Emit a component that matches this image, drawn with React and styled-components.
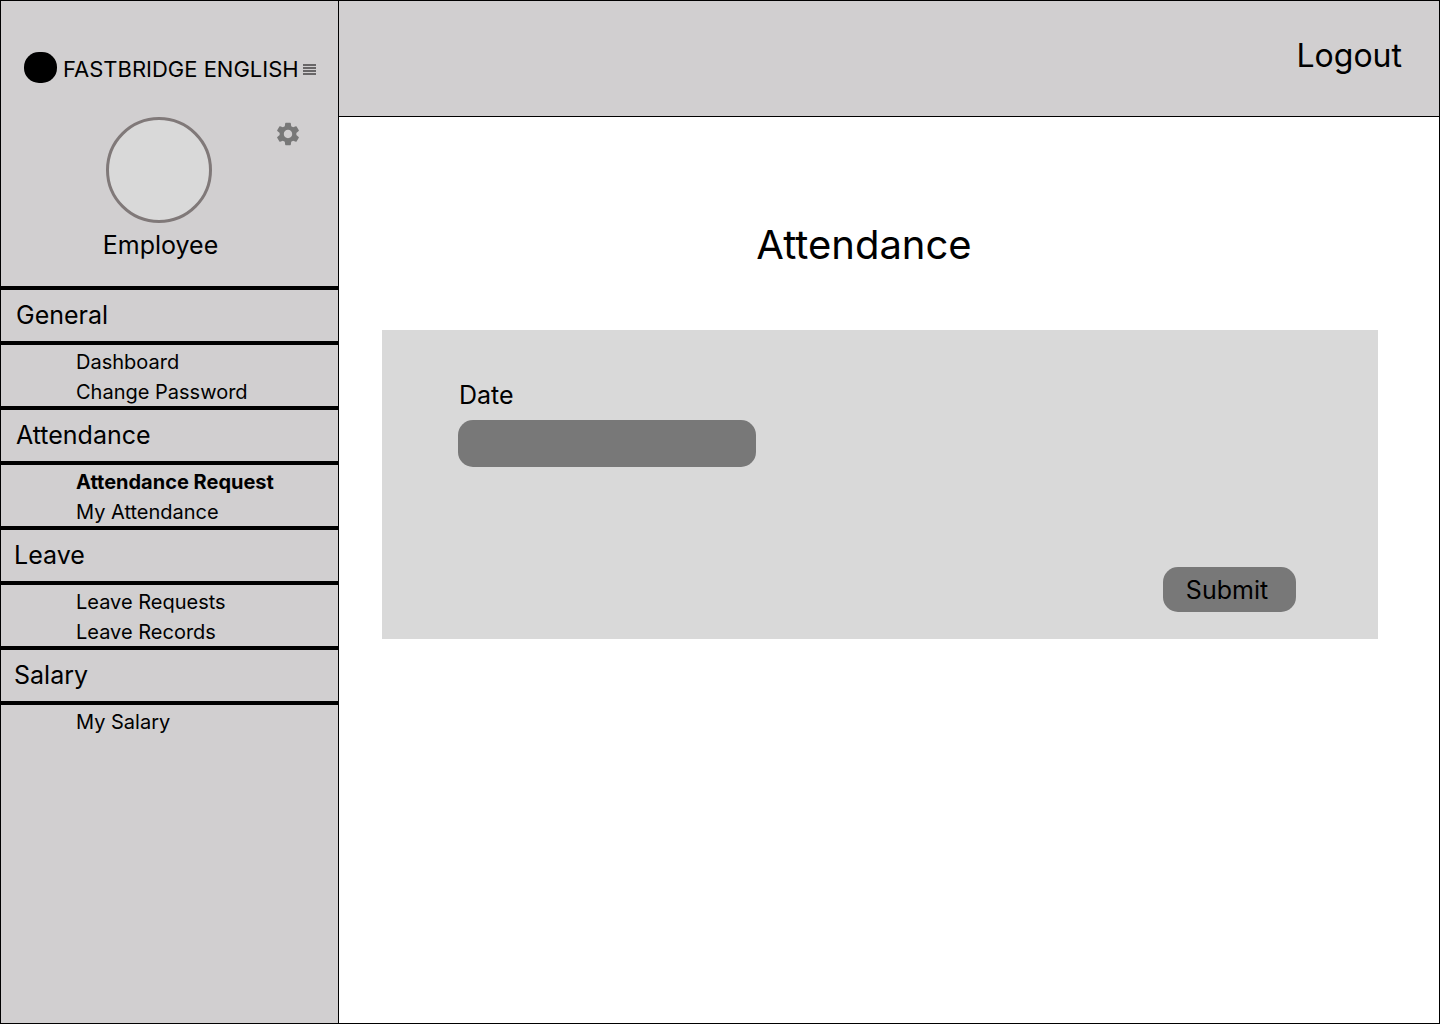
import React from "react";
import styled, { createGlobalStyle } from "styled-components";
import { MdSettings } from "react-icons/md";

const GlobalStyle = createGlobalStyle`
  *, *::before, *::after { box-sizing: border-box; }
  body {
    margin: 0;
    font-family: Inter, "Liberation Sans", sans-serif;
    color: #000;
    background: #fff;
  }
  button, input { font: inherit; color: inherit; }
`;

const Page = styled.div`
  display: grid;
  grid-template-columns: 338px 1fr;
  min-height: 100vh;
  border: 1px solid #000;
`;

const Sidebar = styled.aside`
  border-right: 1px solid #000;
  background: #d1cfd0;
`;

const Brand = styled.div`
  display: flex;
  align-items: flex-end;
  padding: 0 0 2px 23px;
  height: 86px;
  font-size: 22px;
  white-space: nowrap;
`;

const LogoMark = styled.span`
  flex: none;
  width: 33px;
  height: 31px;
  margin: 0 6px 2px 0;
  border-radius: 15px;
  background: #000;
`;

const BrandName = styled.span`
  line-height: 32px;
`;

const IconButton = styled.button`
  display: flex;
  padding: 0;
  border: 0;
  background: none;
  color: #787878;
  cursor: pointer;
`;

const MenuButton = styled(IconButton)`
  margin: 0 0 10px 4px;
  color: #686667;
`;

const Profile = styled.section`
  display: grid;
  grid-template-columns: 1fr 106px 1fr;
  grid-template-rows: 106px 30px;
  row-gap: 7px;
  padding: 30px 22px 0 1px;
  height: 199px;
`;

const Avatar = styled.div`
  grid-column: 2;
  height: 106px;
  border: 3px solid #807979;
  border-radius: 50%;
  background: #d9d9d9;
`;

const SettingsSlot = styled.div`
  justify-self: end;
  padding: 3px 14px 0 0;
`;

const UserName = styled.div`
  grid-column: 1 / -1;
  padding-left: 3px;
  font-size: 25px;
  line-height: 30px;
  text-align: center;
`;

const GroupTitle = styled.h2`
  margin: 0;
  padding: 0 ${(p) => (p.$wide ? 15 : 13)}px;
  border: solid #000;
  border-width: 4px 0;
  font-size: 25px;
  font-weight: 400;
  line-height: 51px;
`;

const GroupList = styled.ul`
  margin: 0 0 -1px;
  padding: 2px 0 0 75px;
  list-style: none;
`;

const GroupLink = styled.a`
  display: block;
  color: inherit;
  font-size: 20px;
  font-weight: ${(p) => (p.$active ? 700 : 400)};
  line-height: 30px;
  text-decoration: none;
`;

const Main = styled.div`
  display: flex;
  flex-direction: column;
`;

const TopBar = styled.header`
  display: flex;
  justify-content: flex-end;
  align-items: center;
  height: 116px;
  padding: 0 37px 6px;
  border-bottom: 1px solid #000;
  background: #d1cfd0;
`;

const LogoutButton = styled.button`
  padding: 0;
  border: 0;
  background: none;
  font-size: 32px;
  line-height: 40px;
  cursor: pointer;
`;

const Content = styled.main`
  padding: 103px 61px 0 43px;
`;

const Title = styled.h1`
  margin: 0 0 60px;
  padding-right: 32px;
  font-size: 40px;
  font-weight: 400;
  line-height: 50px;
  text-align: center;
`;

const Card = styled.form`
  display: flex;
  flex-direction: column;
  padding: 50px 82px 27px 76px;
  background: #d9d9d9;
`;

const Label = styled.label`
  padding-left: 1px;
  font-size: 25px;
  line-height: 30px;
`;

const DateInput = styled.input`
  width: 298px;
  height: 47px;
  margin: 10px 0 100px;
  padding: 0 16px;
  border: 0;
  border-radius: 15px;
  background: #787878;
  font-size: 20px;
`;

const SubmitButton = styled.button`
  align-self: flex-end;
  width: 133px;
  height: 45px;
  padding: 0 5px 0 0;
  border: 0;
  border-radius: 15px;
  background: #787878;
  font-size: 25px;
  cursor: pointer;
`;

const groups = [
  { title: "General", wide: true, items: ["Dashboard", "Change Password"] },
  { title: "Attendance", wide: true, items: ["Attendance Request", "My Attendance"] },
  { title: "Leave", items: ["Leave Requests", "Leave Records"] },
  { title: "Salary", items: ["My Salary"] },
];

const MenuIcon = () => (
  <svg width="13" height="11" viewBox="0 0 13 11" fill="currentColor" aria-hidden="true">
    <path d="M0 0h13v2H0zM0 3h13v2H0zM0 6h13v2H0zM0 9h13v2H0z" />
  </svg>
);

export default function App() {
  return (
    <>
      <GlobalStyle />
      <Page>
        <Sidebar>
          <Brand>
            <LogoMark />
            <BrandName>FASTBRIDGE ENGLISH</BrandName>
            <MenuButton type="button" aria-label="Menu">
              <MenuIcon />
            </MenuButton>
          </Brand>
          <Profile>
            <Avatar />
            <SettingsSlot>
              <IconButton type="button" aria-label="Settings">
                <MdSettings size={28} />
              </IconButton>
            </SettingsSlot>
            <UserName>Employee</UserName>
          </Profile>
          <nav>
            {groups.map((group) => (
              <React.Fragment key={group.title}>
                <GroupTitle $wide={group.wide}>{group.title}</GroupTitle>
                <GroupList>
                  {group.items.map((item) => (
                    <li key={item}>
                      <GroupLink href="#" $active={item === "Attendance Request"}>
                        {item}
                      </GroupLink>
                    </li>
                  ))}
                </GroupList>
              </React.Fragment>
            ))}
          </nav>
        </Sidebar>
        <Main>
          <TopBar>
            <LogoutButton type="button">Logout</LogoutButton>
          </TopBar>
          <Content>
            <Title>Attendance</Title>
            <Card onSubmit={(e) => e.preventDefault()}>
              <Label htmlFor="date">Date</Label>
              <DateInput id="date" type="text" />
              <SubmitButton type="submit">Submit</SubmitButton>
            </Card>
          </Content>
        </Main>
      </Page>
    </>
  );
}
